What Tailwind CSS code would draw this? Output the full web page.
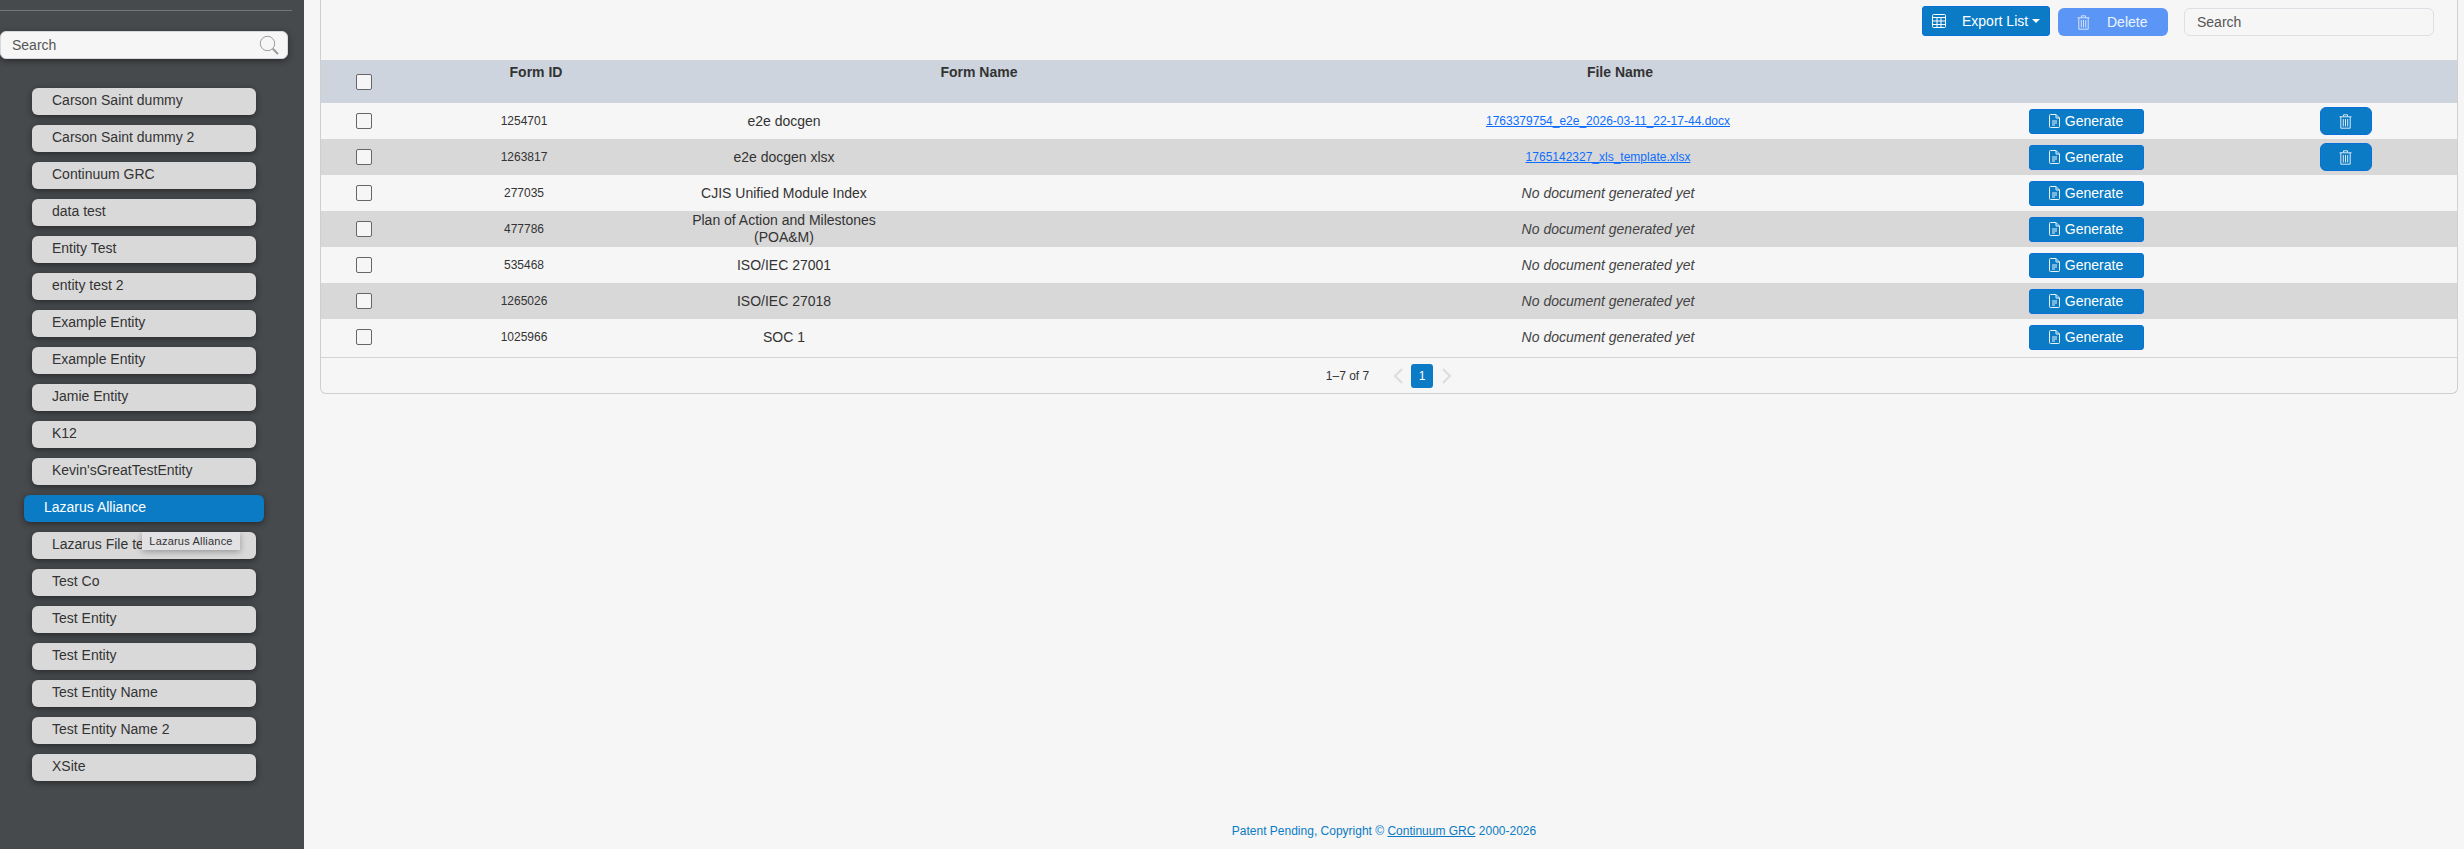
<!DOCTYPE html>
<html lang="en">
<head>
  <meta charset="UTF-8" />
  <title>Document Generation</title>
  <script src="https://cdn.jsdelivr.net/npm/@tailwindcss/browser@4"></script>
</head>
<body class="h-screen overflow-hidden flex bg-[#f6f6f6] text-[#333] font-['Liberation_Sans',Arial,sans-serif]">

  <!-- Sidebar -->
  <aside class="relative w-[304px] h-full shrink-0 bg-[#474a4d] pt-[10px]">
    <div class="w-[292px] h-px bg-[#73777a]"></div>
    <div class="mt-[20px] w-[288px] h-[28px] flex items-center justify-between pl-[11px] pr-[8px] bg-[#f6f6f6] rounded-md border border-[#d5d8dc] shadow-[0_2px_6px_rgba(0,0,0,0.45)] text-sm text-[#555]">
      <span>Search</span>
      <svg class="w-[20px] h-[20px]" viewBox="0 0 20 20" fill="none" stroke="#9a9a9a">
        <circle cx="8.5" cy="8.5" r="7.2" stroke-width="1" />
        <path d="M13.8 13.8 L19 19" stroke-width="2" />
      </svg>
    </div>

    <nav class="mt-[29px] flex flex-col gap-[10px] text-sm text-[#333]">
      <a class="ml-[32px] w-[224px] h-[27px] pl-[20px] pb-[3px] flex items-center rounded-md bg-[#d9d9d9] shadow-[0_2px_6px_rgba(0,0,0,0.45)]">Carson Saint dummy</a>
      <a class="ml-[32px] w-[224px] h-[27px] pl-[20px] pb-[3px] flex items-center rounded-md bg-[#d9d9d9] shadow-[0_2px_6px_rgba(0,0,0,0.45)]">Carson Saint dummy 2</a>
      <a class="ml-[32px] w-[224px] h-[27px] pl-[20px] pb-[3px] flex items-center rounded-md bg-[#d9d9d9] shadow-[0_2px_6px_rgba(0,0,0,0.45)]">Continuum GRC</a>
      <a class="ml-[32px] w-[224px] h-[27px] pl-[20px] pb-[3px] flex items-center rounded-md bg-[#d9d9d9] shadow-[0_2px_6px_rgba(0,0,0,0.45)]">data test</a>
      <a class="ml-[32px] w-[224px] h-[27px] pl-[20px] pb-[3px] flex items-center rounded-md bg-[#d9d9d9] shadow-[0_2px_6px_rgba(0,0,0,0.45)]">Entity Test</a>
      <a class="ml-[32px] w-[224px] h-[27px] pl-[20px] pb-[3px] flex items-center rounded-md bg-[#d9d9d9] shadow-[0_2px_6px_rgba(0,0,0,0.45)]">entity test 2</a>
      <a class="ml-[32px] w-[224px] h-[27px] pl-[20px] pb-[3px] flex items-center rounded-md bg-[#d9d9d9] shadow-[0_2px_6px_rgba(0,0,0,0.45)]">Example Entity</a>
      <a class="ml-[32px] w-[224px] h-[27px] pl-[20px] pb-[3px] flex items-center rounded-md bg-[#d9d9d9] shadow-[0_2px_6px_rgba(0,0,0,0.45)]">Example Entity</a>
      <a class="ml-[32px] w-[224px] h-[27px] pl-[20px] pb-[3px] flex items-center rounded-md bg-[#d9d9d9] shadow-[0_2px_6px_rgba(0,0,0,0.45)]">Jamie Entity</a>
      <a class="ml-[32px] w-[224px] h-[27px] pl-[20px] pb-[3px] flex items-center rounded-md bg-[#d9d9d9] shadow-[0_2px_6px_rgba(0,0,0,0.45)]">K12</a>
      <a class="ml-[32px] w-[224px] h-[27px] pl-[20px] pb-[3px] flex items-center rounded-md bg-[#d9d9d9] shadow-[0_2px_6px_rgba(0,0,0,0.45)]">Kevin'sGreatTestEntity</a>
      <a class="ml-[24px] w-[240px] h-[27px] pl-[20px] pb-[3px] flex items-center rounded-md bg-[#0a7bc4] text-white shadow-[0_2px_6px_rgba(0,0,0,0.45)]">Lazarus Alliance</a>
      <a class="ml-[32px] w-[224px] h-[27px] pl-[20px] pb-[3px] flex items-center rounded-md bg-[#d9d9d9] shadow-[0_2px_6px_rgba(0,0,0,0.45)]">Lazarus File test</a>
      <a class="ml-[32px] w-[224px] h-[27px] pl-[20px] pb-[3px] flex items-center rounded-md bg-[#d9d9d9] shadow-[0_2px_6px_rgba(0,0,0,0.45)]">Test Co</a>
      <a class="ml-[32px] w-[224px] h-[27px] pl-[20px] pb-[3px] flex items-center rounded-md bg-[#d9d9d9] shadow-[0_2px_6px_rgba(0,0,0,0.45)]">Test Entity</a>
      <a class="ml-[32px] w-[224px] h-[27px] pl-[20px] pb-[3px] flex items-center rounded-md bg-[#d9d9d9] shadow-[0_2px_6px_rgba(0,0,0,0.45)]">Test Entity</a>
      <a class="ml-[32px] w-[224px] h-[27px] pl-[20px] pb-[3px] flex items-center rounded-md bg-[#d9d9d9] shadow-[0_2px_6px_rgba(0,0,0,0.45)]">Test Entity Name</a>
      <a class="ml-[32px] w-[224px] h-[27px] pl-[20px] pb-[3px] flex items-center rounded-md bg-[#d9d9d9] shadow-[0_2px_6px_rgba(0,0,0,0.45)]">Test Entity Name 2</a>
      <a class="ml-[32px] w-[224px] h-[27px] pl-[20px] pb-[3px] flex items-center rounded-md bg-[#d9d9d9] shadow-[0_2px_6px_rgba(0,0,0,0.45)]">XSite</a>
    </nav>

    <!-- tooltip over the Lazarus File row -->
    <div class="absolute left-[142px] top-[532px] w-[98px] h-[18px] flex items-center justify-center bg-[#e2e2e4] text-[11px] tracking-[0.2px] text-[#333] shadow-[0_2px_6px_rgba(0,0,0,0.3)]">Lazarus Alliance</div>
  </aside>

  <!-- Main -->
  <main class="flex-1 h-full flex flex-col min-w-0">
    <div class="ml-[16px] mr-[6px] border-x border-b border-[#cfcfcf] rounded-b-md">
      <!-- Toolbar -->
      <div class="h-[60px] flex items-start justify-end pr-[23px]">
        <button class="mt-[6px] w-[128px] h-[30px] flex items-center pl-[9px] rounded-[3px] bg-[#0a7bc4] border border-[#0b6fd8] text-white text-sm">
          <svg class="w-[14px] h-[14px]" viewBox="0 0 14 14" fill="none" stroke="white" stroke-width="1">
            <rect x="0.5" y="0.5" width="13" height="13" rx="1" />
            <path d="M0.5 3.5H13.5M0.5 7H13.5M0.5 10.5H13.5M5 3.5V13.5M9 3.5V13.5" />
          </svg>
          <span class="ml-[16px]">Export List</span>
          <span class="ml-[4px] w-0 h-0 border-x-[4px] border-x-transparent border-t-[4px] border-t-white"></span>
        </button>
        <button class="mt-[8px] ml-[8px] w-[110px] h-[28px] flex items-center pl-[19px] rounded-md bg-[#5b96f7] text-white/90 text-sm">
          <svg class="w-[13px] h-[15px]" viewBox="0 0 13 15" fill="none" stroke="#d6e4fb" stroke-width="1">
            <path d="M0.5 2.8H12.5M4.5 2.5V0.8H8.5V2.5M1.8 2.8V14.2H11.2V2.8M4.3 5V12.5M6.5 5V12.5M8.7 5V12.5" />
          </svg>
          <span class="ml-[17px]">Delete</span>
        </button>
        <div class="mt-[8px] ml-[16px] w-[250px] h-[28px] flex items-center pl-[12px] rounded-md border border-[#dcdfe3] text-sm text-[#555]">Search</div>
      </div>

      <!-- Table head -->
      <div class="h-[43px] grid grid-cols-[86px_258px_628px_654px_1fr] bg-[#cdd4de] text-sm font-bold text-[#333]">
        <div class="flex justify-center pt-[14px]"><span class="w-[16px] h-[16px] rounded-[2px] border border-[#666] bg-[#f6f6f6]"></span></div>
        <div class="text-center pt-[2px]">Form ID</div>
        <div class="text-center pt-[2px]">Form Name</div>
        <div class="text-center pt-[2px]">File Name</div>
        <div></div>
      </div>

      <!-- Rows -->
      <div class="h-[36px] grid grid-cols-[86px_234px_286px_1089px_140px_1fr] items-center">
        <div class="flex justify-center"><span class="w-[16px] h-[16px] rounded-[2px] border border-[#666] bg-[#f6f6f6]"></span></div>
        <div class="text-center text-xs">1254701</div>
        <div class="text-center text-sm">e2e docgen</div>
        <div class="pl-[273px] text-center text-xs"><a class="text-[#0d6efd] underline">1763379754_e2e_2026-03-11_22-17-44.docx</a></div>
        <div class="flex justify-center">
          <button class="w-[115px] h-[25px] flex items-center justify-center gap-[5px] rounded-[3px] bg-[#0a7bc4] border border-[#0b6fd8] text-white text-sm">
            <svg class="w-[11px] h-[14px]" viewBox="0 0 11 14" fill="none" stroke="white" stroke-width="0.9"><path d="M1.5 0.5H7L10.5 4V12.5A1 1 0 0 1 9.5 13.5H1.5A1 1 0 0 1 0.5 12.5V1.5A1 1 0 0 1 1.5 0.5ZM7 0.5V4H10.5M3 7H8M3 9H8M3 11H6" /></svg>
            Generate
          </button>
        </div>
        <div class="pl-[78px] flex justify-center">
          <button class="w-[52px] h-[28px] flex items-center justify-center rounded-md bg-[#0a7bc4] border border-[#0b6fd8]">
            <svg class="w-[13px] h-[15px]" viewBox="0 0 13 15" fill="none" stroke="#dbe9f5" stroke-width="1"><path d="M0.5 2.8H12.5M4.5 2.5V0.8H8.5V2.5M1.8 2.8V14.2H11.2V2.8M4.3 5V12.5M6.5 5V12.5M8.7 5V12.5" /></svg>
          </button>
        </div>
      </div>

      <div class="h-[36px] grid grid-cols-[86px_234px_286px_1089px_140px_1fr] items-center bg-[#d8d8d8]">
        <div class="flex justify-center"><span class="w-[16px] h-[16px] rounded-[2px] border border-[#666] bg-[#f6f6f6]"></span></div>
        <div class="text-center text-xs">1263817</div>
        <div class="text-center text-sm">e2e docgen xlsx</div>
        <div class="pl-[273px] text-center text-xs"><a class="text-[#0d6efd] underline">1765142327_xls_template.xlsx</a></div>
        <div class="flex justify-center">
          <button class="w-[115px] h-[25px] flex items-center justify-center gap-[5px] rounded-[3px] bg-[#0a7bc4] border border-[#0b6fd8] text-white text-sm">
            <svg class="w-[11px] h-[14px]" viewBox="0 0 11 14" fill="none" stroke="white" stroke-width="0.9"><path d="M1.5 0.5H7L10.5 4V12.5A1 1 0 0 1 9.5 13.5H1.5A1 1 0 0 1 0.5 12.5V1.5A1 1 0 0 1 1.5 0.5ZM7 0.5V4H10.5M3 7H8M3 9H8M3 11H6" /></svg>
            Generate
          </button>
        </div>
        <div class="pl-[78px] flex justify-center">
          <button class="w-[52px] h-[28px] flex items-center justify-center rounded-md bg-[#0a7bc4] border border-[#0b6fd8]">
            <svg class="w-[13px] h-[15px]" viewBox="0 0 13 15" fill="none" stroke="#dbe9f5" stroke-width="1"><path d="M0.5 2.8H12.5M4.5 2.5V0.8H8.5V2.5M1.8 2.8V14.2H11.2V2.8M4.3 5V12.5M6.5 5V12.5M8.7 5V12.5" /></svg>
          </button>
        </div>
      </div>

      <div class="h-[36px] grid grid-cols-[86px_234px_286px_1089px_140px_1fr] items-center">
        <div class="flex justify-center"><span class="w-[16px] h-[16px] rounded-[2px] border border-[#666] bg-[#f6f6f6]"></span></div>
        <div class="text-center text-xs">277035</div>
        <div class="text-center text-sm">CJIS Unified Module Index</div>
        <div class="pl-[273px] text-center text-sm italic text-[#444]">No document generated yet</div>
        <div class="flex justify-center">
          <button class="w-[115px] h-[25px] flex items-center justify-center gap-[5px] rounded-[3px] bg-[#0a7bc4] border border-[#0b6fd8] text-white text-sm">
            <svg class="w-[11px] h-[14px]" viewBox="0 0 11 14" fill="none" stroke="white" stroke-width="0.9"><path d="M1.5 0.5H7L10.5 4V12.5A1 1 0 0 1 9.5 13.5H1.5A1 1 0 0 1 0.5 12.5V1.5A1 1 0 0 1 1.5 0.5ZM7 0.5V4H10.5M3 7H8M3 9H8M3 11H6" /></svg>
            Generate
          </button>
        </div>
        <div></div>
      </div>

      <div class="h-[36px] grid grid-cols-[86px_234px_286px_1089px_140px_1fr] items-center bg-[#d8d8d8]">
        <div class="flex justify-center"><span class="w-[16px] h-[16px] rounded-[2px] border border-[#666] bg-[#f6f6f6]"></span></div>
        <div class="text-center text-xs">477786</div>
        <div class="w-[200px] mx-auto text-center text-sm leading-[17px]">Plan of Action and Milestones (POA&amp;M)</div>
        <div class="pl-[273px] text-center text-sm italic text-[#444]">No document generated yet</div>
        <div class="flex justify-center">
          <button class="w-[115px] h-[25px] flex items-center justify-center gap-[5px] rounded-[3px] bg-[#0a7bc4] border border-[#0b6fd8] text-white text-sm">
            <svg class="w-[11px] h-[14px]" viewBox="0 0 11 14" fill="none" stroke="white" stroke-width="0.9"><path d="M1.5 0.5H7L10.5 4V12.5A1 1 0 0 1 9.5 13.5H1.5A1 1 0 0 1 0.5 12.5V1.5A1 1 0 0 1 1.5 0.5ZM7 0.5V4H10.5M3 7H8M3 9H8M3 11H6" /></svg>
            Generate
          </button>
        </div>
        <div></div>
      </div>

      <div class="h-[36px] grid grid-cols-[86px_234px_286px_1089px_140px_1fr] items-center">
        <div class="flex justify-center"><span class="w-[16px] h-[16px] rounded-[2px] border border-[#666] bg-[#f6f6f6]"></span></div>
        <div class="text-center text-xs">535468</div>
        <div class="text-center text-sm">ISO/IEC 27001</div>
        <div class="pl-[273px] text-center text-sm italic text-[#444]">No document generated yet</div>
        <div class="flex justify-center">
          <button class="w-[115px] h-[25px] flex items-center justify-center gap-[5px] rounded-[3px] bg-[#0a7bc4] border border-[#0b6fd8] text-white text-sm">
            <svg class="w-[11px] h-[14px]" viewBox="0 0 11 14" fill="none" stroke="white" stroke-width="0.9"><path d="M1.5 0.5H7L10.5 4V12.5A1 1 0 0 1 9.5 13.5H1.5A1 1 0 0 1 0.5 12.5V1.5A1 1 0 0 1 1.5 0.5ZM7 0.5V4H10.5M3 7H8M3 9H8M3 11H6" /></svg>
            Generate
          </button>
        </div>
        <div></div>
      </div>

      <div class="h-[36px] grid grid-cols-[86px_234px_286px_1089px_140px_1fr] items-center bg-[#d8d8d8]">
        <div class="flex justify-center"><span class="w-[16px] h-[16px] rounded-[2px] border border-[#666] bg-[#f6f6f6]"></span></div>
        <div class="text-center text-xs">1265026</div>
        <div class="text-center text-sm">ISO/IEC 27018</div>
        <div class="pl-[273px] text-center text-sm italic text-[#444]">No document generated yet</div>
        <div class="flex justify-center">
          <button class="w-[115px] h-[25px] flex items-center justify-center gap-[5px] rounded-[3px] bg-[#0a7bc4] border border-[#0b6fd8] text-white text-sm">
            <svg class="w-[11px] h-[14px]" viewBox="0 0 11 14" fill="none" stroke="white" stroke-width="0.9"><path d="M1.5 0.5H7L10.5 4V12.5A1 1 0 0 1 9.5 13.5H1.5A1 1 0 0 1 0.5 12.5V1.5A1 1 0 0 1 1.5 0.5ZM7 0.5V4H10.5M3 7H8M3 9H8M3 11H6" /></svg>
            Generate
          </button>
        </div>
        <div></div>
      </div>

      <div class="h-[36px] grid grid-cols-[86px_234px_286px_1089px_140px_1fr] items-center">
        <div class="flex justify-center"><span class="w-[16px] h-[16px] rounded-[2px] border border-[#666] bg-[#f6f6f6]"></span></div>
        <div class="text-center text-xs">1025966</div>
        <div class="text-center text-sm">SOC 1</div>
        <div class="pl-[273px] text-center text-sm italic text-[#444]">No document generated yet</div>
        <div class="flex justify-center">
          <button class="w-[115px] h-[25px] flex items-center justify-center gap-[5px] rounded-[3px] bg-[#0a7bc4] border border-[#0b6fd8] text-white text-sm">
            <svg class="w-[11px] h-[14px]" viewBox="0 0 11 14" fill="none" stroke="white" stroke-width="0.9"><path d="M1.5 0.5H7L10.5 4V12.5A1 1 0 0 1 9.5 13.5H1.5A1 1 0 0 1 0.5 12.5V1.5A1 1 0 0 1 1.5 0.5ZM7 0.5V4H10.5M3 7H8M3 9H8M3 11H6" /></svg>
            Generate
          </button>
        </div>
        <div></div>
      </div>

      <!-- Pagination -->
      <div class="h-[36px] mt-[2px] border-t border-[#d5d5d5] flex items-center justify-center text-xs text-[#333]">
        <span>1–7 of 7</span>
        <svg class="ml-[24px] w-[10px] h-[16px]" viewBox="0 0 10 16" fill="none" stroke="#dcdcdc" stroke-width="2"><path d="M9 1L2 8L9 15" /></svg>
        <span class="ml-[8px] w-[22px] h-[24px] flex items-center justify-center rounded-[3px] bg-[#0a7bc4] text-white">1</span>
        <svg class="ml-[9px] w-[10px] h-[16px]" viewBox="0 0 10 16" fill="none" stroke="#dcdcdc" stroke-width="2"><path d="M1 1L8 8L1 15" /></svg>
      </div>
    </div>

    <footer class="mt-auto h-[26px] text-center text-xs text-[#0a7bc4]">
      Patent Pending, Copyright © <a class="underline">Continuum GRC</a> 2000-2026
    </footer>
  </main>
</body>
</html>
